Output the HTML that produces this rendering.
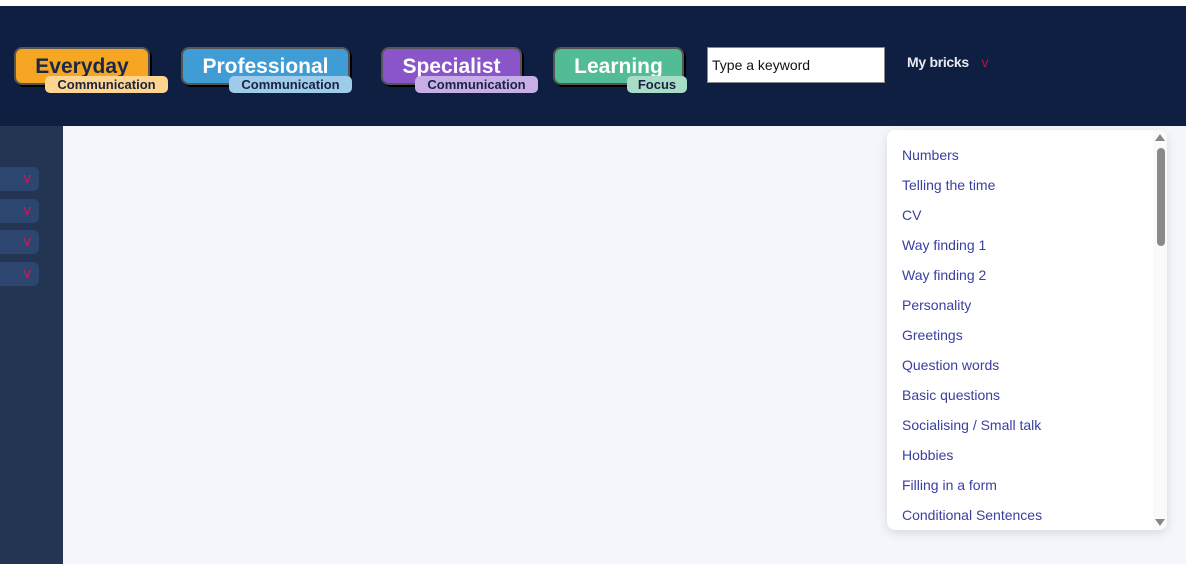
<!DOCTYPE html>
<html><head><style>
*{margin:0;padding:0;box-sizing:border-box}
body{width:1186px;height:564px;overflow:hidden;background:#f3f6fb;font-family:"Liberation Sans",sans-serif;position:relative}
.top{position:absolute;left:0;top:0;width:1186px;height:6px;background:#fff}
.hdr{position:absolute;left:0;top:6px;width:1186px;height:120px;background:#0f1f42}
.side{position:absolute;left:0;top:126px;width:63px;height:438px;background:#243554}
.sb{position:absolute;left:-8px;width:47px;height:24px;background:#2c4670;border-radius:6px;color:#d8174f;font-size:15px;text-align:right;padding-right:8px;line-height:24px}
.btn{position:absolute;top:47px;height:38px;border:2px solid #555;border-radius:8px;box-shadow:2px 2px 0 #000;font-weight:bold;font-size:21px;text-align:center;line-height:36px}
.tag{position:absolute;top:76px;height:17px;border-radius:5px;font-weight:bold;font-size:13px;color:#1a2340;text-align:center;line-height:17px}
.inp{position:absolute;left:707px;top:47px;width:178px;height:36px;background:#fff;border:1px solid #888;font-size:14px;line-height:34px;padding-left:4px;color:#111}
.mb{position:absolute;left:907px;top:54px;color:#e8eaf0;font-size:14px;font-weight:bold;letter-spacing:-0.3px}
.dd{position:absolute;left:887px;top:130px;width:280px;height:400px;background:#fff;border-radius:8px;box-shadow:0 3px 10px rgba(0,0,0,.12);overflow:hidden}
.dd div.i{position:absolute;left:15px;font-size:14px;color:#3a40a0}
.track{position:absolute;right:0;top:0;width:14px;height:400px;background:#fafafa}
.thumb{position:absolute;right:2px;top:18px;width:8px;height:98px;background:#8a8a8a;border-radius:4px}
</style></head><body>
<div class="top"></div>
<div class="hdr"></div>
<div class="side"></div>
<div class="sb" style="top:167px">v</div>
<div class="sb" style="top:199px">v</div>
<div class="sb" style="top:230px">v</div>
<div class="sb" style="top:262px">v</div>

<div class="btn" style="left:14px;width:136px;background:#f6a623;color:#1a2848">Everyday</div>
<div class="tag" style="left:45px;width:123px;background:#fdd490">Communication</div>
<div class="btn" style="left:181px;width:169px;background:#409cd4;color:#fff">Professional</div>
<div class="tag" style="left:229px;width:123px;background:#9ecbea">Communication</div>
<div class="btn" style="left:381px;width:141px;background:#8a55c8;color:#fff">Specialist</div>
<div class="tag" style="left:415px;width:123px;background:#c8aee8">Communication</div>
<div class="btn" style="left:553px;width:131px;background:#52bc94;color:#fff">Learning</div>
<div class="tag" style="left:627px;width:60px;background:#a8dcc6">Focus</div>
<div class="inp">Type a keyword</div>
<div class="mb">My bricks <span style="color:#b0153f;font-weight:normal;margin-left:9px">v</span></div>

<div class="dd">
<div class="i" style="top:17px">Numbers</div>
<div class="i" style="top:47px">Telling the time</div>
<div class="i" style="top:77px">CV</div>
<div class="i" style="top:107px">Way finding 1</div>
<div class="i" style="top:137px">Way finding 2</div>
<div class="i" style="top:167px">Personality</div>
<div class="i" style="top:197px">Greetings</div>
<div class="i" style="top:227px">Question words</div>
<div class="i" style="top:257px">Basic questions</div>
<div class="i" style="top:287px">Socialising / Small talk</div>
<div class="i" style="top:317px">Hobbies</div>
<div class="i" style="top:347px">Filling in a form</div>
<div class="i" style="top:377px">Conditional Sentences</div>
<div class="track"></div>
<div class="thumb"></div>
<div style="position:absolute;right:2px;top:4px;width:0;height:0;border-left:5px solid transparent;border-right:5px solid transparent;border-bottom:7px solid #888"></div>
<div style="position:absolute;right:2px;top:389px;width:0;height:0;border-left:5px solid transparent;border-right:5px solid transparent;border-top:7px solid #888"></div>
</div>
</body></html>
